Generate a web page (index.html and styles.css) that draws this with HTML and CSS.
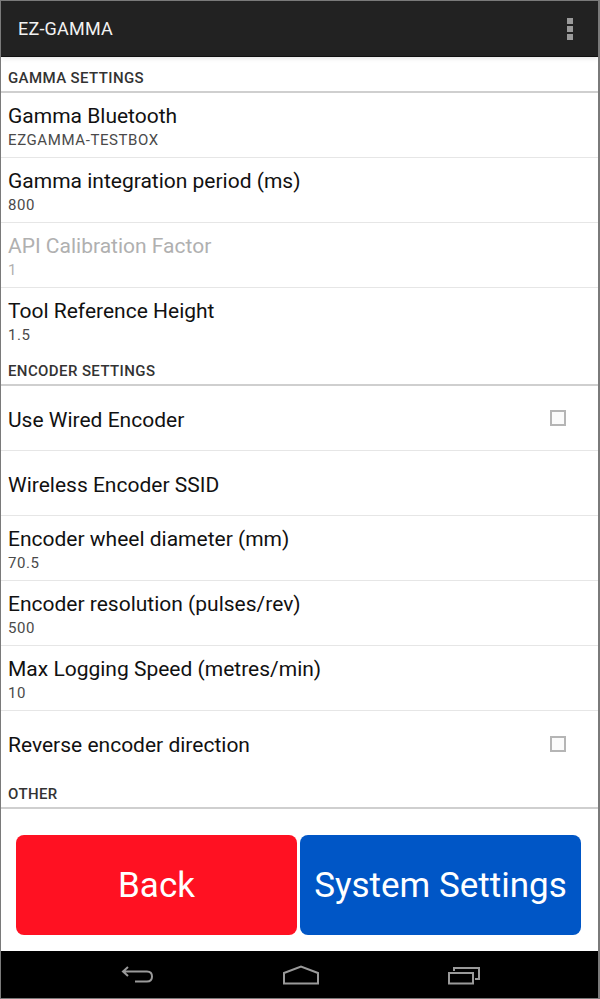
FILE: index.html
```html
<!DOCTYPE html>
<html>
<head>
<meta charset="utf-8">
<link rel="stylesheet" href="styles.css">
</head>
<body>
<div class="screen">
  <header class="actionbar">
    <span class="app-title">EZ-GAMMA</span>
    <div class="overflow"><i></i><i></i><i></i></div>
  </header>
  <div class="list">
    <div class="cat first">GAMMA SETTINGS</div>
    <div class="pref"><div class="t">Gamma Bluetooth</div><div class="s">EZGAMMA-TESTBOX</div></div>
    <div class="pref"><div class="t">Gamma integration period (ms)</div><div class="s">800</div></div>
    <div class="pref disabled"><div class="t">API Calibration Factor</div><div class="s">1</div></div>
    <div class="pref last"><div class="t">Tool Reference Height</div><div class="s">1.5</div></div>
    <div class="cat">ENCODER SETTINGS</div>
    <div class="pref check"><div class="t">Use Wired Encoder</div><span class="box"></span></div>
    <div class="pref single"><div class="t">Wireless Encoder SSID</div></div>
    <div class="pref"><div class="t">Encoder wheel diameter (mm)</div><div class="s">70.5</div></div>
    <div class="pref"><div class="t">Encoder resolution (pulses/rev)</div><div class="s">500</div></div>
    <div class="pref"><div class="t">Max Logging Speed (metres/min)</div><div class="s">10</div></div>
    <div class="pref check last"><div class="t">Reverse encoder direction</div><span class="box"></span></div>
    <div class="cat">OTHER</div>
  </div>
  <div class="buttons">
    <button class="btn back">Back</button>
    <button class="btn sys">System Settings</button>
  </div>
  <nav class="navbar">
    <svg class="nav-back" width="34" height="20" viewBox="0 0 34 20"><path d="M7 2 L2 6.5 L7 11 M2 6.5 H26 Q31 6.5 31 11.5 Q31 16.5 26 16.5 H14" fill="none" stroke="#9a9a9a" stroke-width="2"/></svg>
    <svg class="nav-home" width="38" height="20" viewBox="0 0 38 20"><path d="M2 8 L19 1.5 L36 8 V18.5 H2 Z" fill="none" stroke="#9a9a9a" stroke-width="2"/></svg>
    <svg class="nav-rec" width="34" height="20" viewBox="0 0 34 20"><path d="M2 8 H26 V18.5 H2 Z" fill="none" stroke="#9a9a9a" stroke-width="2"/><path d="M7 6 V3 H32 V14 H28" fill="none" stroke="#9a9a9a" stroke-width="2"/></svg>
  </nav>
</div>
</body>
</html>
```
FILE: styles.css
```css
* { box-sizing: border-box; }
html, body { margin: 0; padding: 0; background: #fff; }
body { font-family: Roboto, "Noto Sans", sans-serif; }
.screen {
  width: 600px; height: 999px;
  border-left: 1px solid #7a7a7a;
  border-right: 2px solid #7a7a7a;
  border-top: 1px solid #7a7a7a;
  border-bottom: 1px solid #7a7a7a;
  display: flex; flex-direction: column;
  overflow: hidden;
  background: #fff;
}
.actionbar {
  height: 55px; flex: none;
  background: #222;
  display: flex; align-items: center; justify-content: space-between;
  padding: 0 25px 0 17px;
  position: relative;
  box-shadow: 0 1px 0 #111, 0 2px 5px rgba(0,0,0,0.12);
}
.app-title { color: #f2f2f2; font-size: 18px; letter-spacing: 0.2px; }
.overflow { display: flex; flex-direction: column; gap: 2px; }
.overflow i { display: block; width: 6px; height: 6px; background: #9a9a9a; }
.list { flex: none; padding-top: 4px; }
.cat {
  height: 33px; padding: 4px 7px 0;
  font-size: 15px; font-weight: 500; color: #333; letter-spacing: 0.4px;
  display: flex; align-items: center;
  border-bottom: 2px solid #cfcfcf;
}
.pref {
  height: 65px; padding: 5px 7px 0;
  border-bottom: 1px solid #e6e6e6;
  display: flex; flex-direction: column; justify-content: center;
  position: relative;
}
.pref.last { border-bottom: none; }
.pref .t { font-size: 21px; color: #111; line-height: 24px; }
.pref .s { font-size: 15px; color: #4a4a4a; line-height: 24px; letter-spacing: 0.6px; }
.pref.disabled .t, .pref.disabled .s { color: #b0b0b0; }
.pref.check { flex-direction: row; align-items: center; justify-content: space-between; padding: 0 32px 0 7px; }
.pref.check .t { margin-top: 3px; }
.pref.single { padding-top: 3px; }
.box { width: 16px; height: 16px; border: 2px solid #b5b5b5; background: #fbfbfb; }
.buttons {
  flex: 1;
  display: flex; gap: 3px;
  padding: 26px 17px 15px 15px;
}
.btn {
  flex: 1; height: 100px; border: none; border-radius: 8px;
  color: #fff; font-family: Roboto, sans-serif; font-size: 35px;
  padding: 0;
}
.back { background: #ff1122; }
.sys { background: #0056c6; }
.navbar {
  height: 47px; flex: none; background: #000;
  display: flex; align-items: center; justify-content: space-between;
  padding: 0 117px 0 120px;
}
```
